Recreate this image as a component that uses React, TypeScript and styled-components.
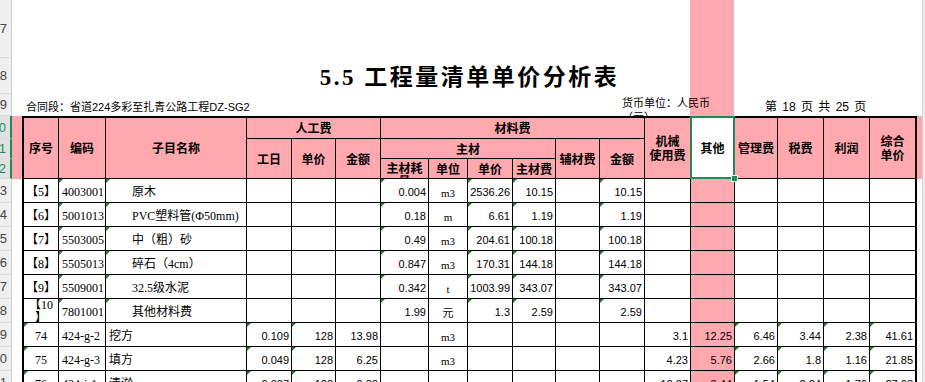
import React from 'react';
import styled, { createGlobalStyle, css } from 'styled-components';

const PINK = '#ffa9af';
const LINE = '#000';
const SELECT = '#1d8a58';
const MARK = '#1b7f1b';

const GlobalStyle = createGlobalStyle`
  html, body {
    margin: 0;
    padding: 0;
    background: #fff;
    overflow: hidden;
  }
  body {
    font-family: 'Noto Sans CJK SC', sans-serif;
    color: #000;
  }
`;

// column widths, px: row header, gutter, 18 data columns, right margin, scroll strip
const COLS = [12, 10, 37, 47, 141, 45, 44, 45, 48, 39, 45, 43, 44, 45, 46, 44, 43, 46, 46, 47, 5, 3];

const Sheet = styled.table`
  border-collapse: separate;
  border-spacing: 0;
  table-layout: fixed;
  width: 925px;
  background-color: #fff;
  background-image: linear-gradient(
    to right,
    transparent 690px,
    ${PINK} 690px,
    ${PINK} 734px,
    transparent 734px
  );
`;

const Col = styled.col<{ $w: number }>`
  width: ${(p) => p.$w}px;
`;

const Row = styled.tr<{ $h: number }>`
  height: ${(p) => p.$h}px;
`;

const RowHead = styled.td<{ $active?: boolean }>`
  padding: 0;
  background: ${(p) => (p.$active ? '#e1e1e1' : '#efefef')};
  border-right: ${(p) => (p.$active ? `2px solid ${SELECT}` : '1px solid #cdcdcd')};
  border-bottom: 1px solid #dadada;
  vertical-align: middle;
`;

const RowNum = styled.div<{ $active?: boolean }>`
  display: flex;
  justify-content: flex-end;
  overflow: hidden;
  white-space: nowrap;
  padding-right: 4px;
  font: 13px/15px 'Liberation Sans', sans-serif;
  color: ${(p) => (p.$active ? SELECT : '#444')};
`;

const Fill = styled.td<{ $pink?: boolean }>`
  padding: 0;
  background: ${(p) => (p.$pink ? PINK : 'transparent')};
`;

const Strip = styled.td`
  padding: 0;
  background: #ececec;
  border-left: 1px solid #d4d4d4;
`;

const Title = styled.td`
  padding: 0 0 3px;
  text-align: center;
  vertical-align: bottom;
  white-space: nowrap;
  font: bold 23px/26px 'Liberation Serif', 'Noto Sans CJK SC', serif;
  letter-spacing: 2.5px;
`;

const Info = styled.td<{ $pad: number; $size: number }>`
  padding: 0 0 2px ${(p) => p.$pad}px;
  vertical-align: bottom;
  white-space: nowrap;
  overflow: hidden;
  font: ${(p) => p.$size}px/14px 'Liberation Sans', 'Noto Sans CJK SC', sans-serif;
  word-spacing: 2px;
`;

const Currency = styled.td`
  padding: 0;
  vertical-align: top;
`;

const CurrencyText = styled.div`
  height: 22px;
  overflow: hidden;
  box-sizing: border-box;
  padding: 1px 0 0 22px;
  font: 11px/14px 'Noto Sans CJK SC', sans-serif;
  white-space: nowrap;
`;

const Head = styled.td<{ $top?: boolean; $left?: boolean; $right?: boolean; $selected?: boolean }>`
  position: relative;
  padding: 0 1px;
  background: ${(p) => (p.$selected ? '#fff' : PINK)};
  border-top: ${(p) => (p.$top ? `2px solid ${LINE}` : 'none')};
  border-left: ${(p) => (p.$left ? `2px solid ${LINE}` : 'none')};
  border-right: ${(p) => (p.$right ? 2 : 1)}px solid ${LINE};
  border-bottom: 1px solid ${LINE};
  text-align: center;
  vertical-align: middle;
  white-space: nowrap;
  font: bold 12px/14px 'Noto Sans CJK SC', sans-serif;
  ${(p) =>
    !p.$selected &&
    css`
      overflow: hidden;
    `}
`;

const HeadClip = styled.div`
  height: 19px;
  overflow: hidden;
  box-sizing: border-box;
  padding-top: 2px;
  line-height: 13px;
`;

const Selection = styled.div`
  position: absolute;
  top: -2px;
  left: -1px;
  right: -1px;
  bottom: -1px;
  border: 2px solid ${SELECT};
  z-index: 2;
  pointer-events: none;
`;

const Handle = styled.div`
  position: absolute;
  right: -5px;
  bottom: -5px;
  width: 5px;
  height: 5px;
  background: ${SELECT};
  border: 1px solid #fff;
`;

type Kind = 'seq' | 'code' | 'name' | 'num' | 'unit';

const kindStyles: Record<Kind, ReturnType<typeof css>> = {
  seq: css`
    text-align: center;
    font: 12px/14px 'Liberation Serif', 'Noto Sans CJK SC', serif;
  `,
  code: css`
    text-align: left;
    padding-left: 3px;
    font: 12px/14px 'Liberation Serif', 'Noto Sans CJK SC', serif;
  `,
  name: css`
    text-align: left;
    padding-left: 3px;
    font: 12px/14px 'Liberation Serif', 'Noto Sans CJK SC', serif;
  `,
  num: css`
    text-align: right;
    padding-right: 2px;
    font: 11px/14px 'Liberation Sans', sans-serif;
  `,
  unit: css`
    text-align: center;
    padding-top: 4px;
    font: 11px/14px 'Liberation Serif', 'Noto Sans CJK SC', serif;
  `,
};

const Cell = styled.td<{
  $kind: Kind;
  $pink?: boolean;
  $mark?: boolean;
  $left?: boolean;
  $right?: boolean;
  $indent?: boolean;
}>`
  position: relative;
  padding: 2px 1px 0;
  background: ${(p) => (p.$pink ? PINK : '#fff')};
  border-left: ${(p) => (p.$left ? `2px solid ${LINE}` : 'none')};
  border-right: ${(p) => (p.$right ? 2 : 1)}px solid ${LINE};
  border-bottom: 1px solid ${LINE};
  vertical-align: middle;
  white-space: nowrap;
  overflow: hidden;
  color: #000;
  ${(p) => kindStyles[p.$kind]}
  ${(p) =>
    p.$indent &&
    css`
      padding-left: 26px;
    `}
  ${(p) =>
    p.$mark &&
    css`
      &::before {
        content: '';
        position: absolute;
        top: 0;
        left: 0;
        border-top: 4px solid ${MARK};
        border-right: 4px solid transparent;
      }
    `}
`;

const CellClip = styled.div`
  height: 23px;
  margin-top: -2px;
  overflow: hidden;
  line-height: 13px;
`;

const KIND: Kind[] = [
  'seq', 'code', 'name', 'num', 'num', 'num', 'num', 'unit', 'num',
  'num', 'num', 'num', 'num', 'num', 'num', 'num', 'num', 'num',
];

const MAT_MARKS = [1, 2, 6, 8, 9, 11];
const ITEM_MARKS = [0, 3, 4, 14, 15, 16, 17];

type Line = { no: number; kind: 'mat' | 'item'; cells: string[] };

const pad = (a: string[]) => [...a, ...Array(18 - a.length).fill('')];

const lines: Line[] = [
  { no: 13, kind: 'mat', cells: pad(['【5】', '4003001', '原木', '', '', '', '0.004', 'm3', '2536.26', '10.15', '', '10.15']) },
  { no: 14, kind: 'mat', cells: pad(['【6】', '5001013', 'PVC塑料管(Φ50mm)', '', '', '', '0.18', 'm', '6.61', '1.19', '', '1.19']) },
  { no: 15, kind: 'mat', cells: pad(['【7】', '5503005', '中（粗）砂', '', '', '', '0.49', 'm3', '204.61', '100.18', '', '100.18']) },
  { no: 16, kind: 'mat', cells: pad(['【8】', '5505013', '碎石（4cm）', '', '', '', '0.847', 'm3', '170.31', '144.18', '', '144.18']) },
  { no: 17, kind: 'mat', cells: pad(['【9】', '5509001', '32.5级水泥', '', '', '', '0.342', 't', '1003.99', '343.07', '', '343.07']) },
  { no: 18, kind: 'mat', cells: pad(['【10\n】', '7801001', '其他材料费', '', '', '', '1.99', '元', '1.3', '2.59', '', '2.59']) },
  { no: 19, kind: 'item', cells: ['74', '424-g-2', '挖方', '0.109', '128', '13.98', '', 'm3', '', '', '', '', '3.1', '12.25', '6.46', '3.44', '2.38', '41.61'] },
  { no: 20, kind: 'item', cells: ['75', '424-g-3', '填方', '0.049', '128', '6.25', '', 'm3', '', '', '', '', '4.23', '5.76', '2.66', '1.8', '1.16', '21.85'] },
  { no: 21, kind: 'item', cells: ['76', '424-j-1', '清淤', '0.007', '128', '0.83', '', 'm3', '', '', '', '', '12.27', '8.44', '1.54', '2.24', '1.76', '27.08'] },
];

const withBreaks = (s: string) =>
  s.split('\n').map((part, i) => (
    <React.Fragment key={i}>
      {i > 0 && <br />}
      {part}
    </React.Fragment>
  ));

const RowHeader = ({ n, active }: { n: number; active?: boolean }) => (
  <RowHead $active={active}>
    <RowNum $active={active}>{n}</RowNum>
  </RowHead>
);

const DataRow = ({ line }: { line: Line }) => {
  const marks = line.kind === 'mat' ? MAT_MARKS : ITEM_MARKS;
  return (
    <Row $h={24}>
      <RowHeader n={line.no} />
      <Fill />
      {line.cells.map((v, i) => (
        <Cell
          key={i}
          $kind={KIND[i]}
          $pink={i === 13}
          $mark={marks.includes(i)}
          $left={i === 0}
          $right={i === 17}
          $indent={line.kind === 'mat' && i === 2}
        >
          {v.includes('\n') ? <CellClip>{withBreaks(v)}</CellClip> : v}
        </Cell>
      ))}
      <Fill />
      <Strip />
    </Row>
  );
};

export default function App() {
  return (
    <>
      <GlobalStyle />
      <Sheet>
        <colgroup>
          {COLS.map((w, i) => (
            <Col key={i} $w={w} />
          ))}
        </colgroup>
        <tbody>
          <Row $h={58}>
            <RowHeader n={7} />
            <Fill />
            <Fill colSpan={18} />
            <Fill />
            <Strip />
          </Row>
          <Row $h={36}>
            <RowHeader n={8} />
            <Fill />
            <Title colSpan={18}>5.5 工程量清单单价分析表</Title>
            <Fill />
            <Strip />
          </Row>
          <Row $h={22}>
            <RowHeader n={9} />
            <Fill />
            <Info colSpan={11} $pad={4} $size={11}>
              合同段：省道224多彩至扎青公路工程DZ-SG2
            </Info>
            <Currency colSpan={3}>
              <CurrencyText>
                货币单位：人民币
                <br />
                （元）
              </CurrencyText>
            </Currency>
            <Info colSpan={4} $pad={30} $size={12}>
              第 18 页 共 25 页
            </Info>
            <Fill />
            <Strip />
          </Row>

          <Row $h={23}>
            <RowHeader n={10} active />
            <Fill $pink />
            <Head rowSpan={3} $top $left>序号</Head>
            <Head rowSpan={3} $top>编码</Head>
            <Head rowSpan={3} $top>子目名称</Head>
            <Head colSpan={3} $top>人工费</Head>
            <Head colSpan={6} $top>材料费</Head>
            <Head rowSpan={3} $top>
              机械
              <br />
              使用费
            </Head>
            <Head rowSpan={3} $top $selected>
              其他
              <Selection>
                <Handle />
              </Selection>
            </Head>
            <Head rowSpan={3} $top>管理费</Head>
            <Head rowSpan={3} $top>税费</Head>
            <Head rowSpan={3} $top>利润</Head>
            <Head rowSpan={3} $top $right>
              综合
              <br />
              单价
            </Head>
            <Fill $pink />
            <Strip />
          </Row>
          <Row $h={20}>
            <RowHeader n={11} active />
            <Fill $pink />
            <Head rowSpan={2}>工日</Head>
            <Head rowSpan={2}>单价</Head>
            <Head rowSpan={2}>金额</Head>
            <Head colSpan={4}>主材</Head>
            <Head rowSpan={2}>辅材费</Head>
            <Head rowSpan={2}>金额</Head>
            <Fill $pink />
            <Strip />
          </Row>
          <Row $h={20}>
            <RowHeader n={12} active />
            <Fill $pink />
            <Head>
              <HeadClip>
                主材耗
                <br />
                量
              </HeadClip>
            </Head>
            <Head>单位</Head>
            <Head>单价</Head>
            <Head>主材费</Head>
            <Fill $pink />
            <Strip />
          </Row>

          {lines.map((line) => (
            <DataRow key={line.no} line={line} />
          ))}
        </tbody>
      </Sheet>
    </>
  );
}
